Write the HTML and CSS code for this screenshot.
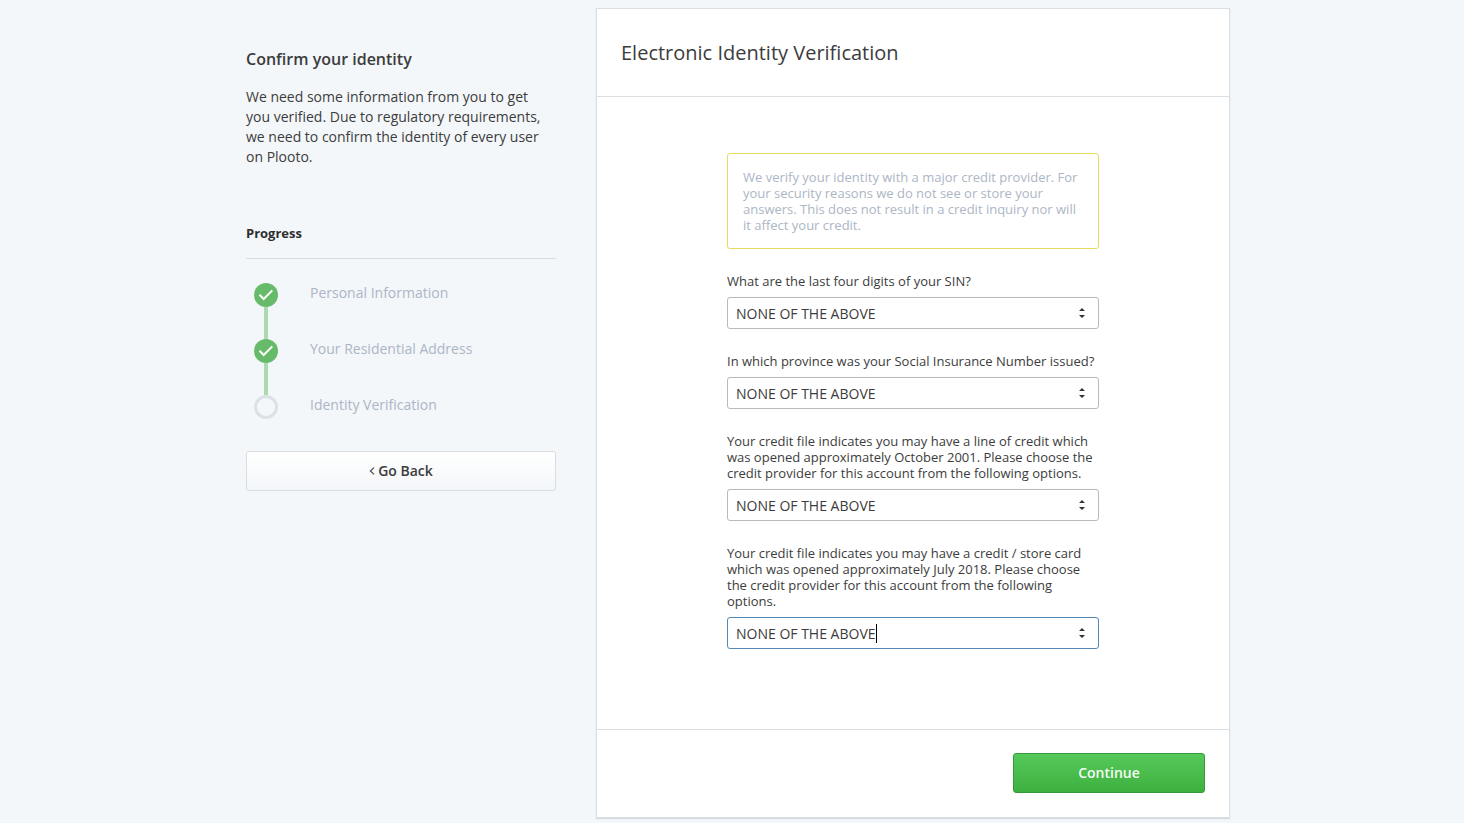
FILE: index.html
```html
<!DOCTYPE html>
<html lang="en">
<head>
<meta charset="utf-8">
<meta name="viewport" content="width=device-width, initial-scale=1">
<title>Electronic Identity Verification</title>
<link rel="stylesheet" href="styles.css">
</head>
<body>
<div class="page">
  <aside class="sidebar">
    <h1 class="sidebar-title">Confirm your identity</h1>
    <p class="sidebar-text">We need some information from you to get you verified. Due to regulatory requirements, we need to confirm the identity of every user on Plooto.</p>
    <h2 class="progress-title">Progress</h2>
    <ol class="steps">
      <li class="step step-done">
        <svg class="step-icon" viewBox="0 0 24 24" aria-hidden="true"><circle cx="12" cy="12" r="12" fill="#66bb6a"/><path d="M5.5 11.8l4.2 4.2 8.6-8.6" fill="none" stroke="#fff" stroke-width="2"/></svg>
        <span class="step-label">Personal Information</span>
      </li>
      <li class="step step-done">
        <svg class="step-icon" viewBox="0 0 24 24" aria-hidden="true"><circle cx="12" cy="12" r="12" fill="#66bb6a"/><path d="M5.5 11.8l4.2 4.2 8.6-8.6" fill="none" stroke="#fff" stroke-width="2"/></svg>
        <span class="step-label">Your Residential Address</span>
      </li>
      <li class="step">
        <svg class="step-icon" viewBox="0 0 24 24" aria-hidden="true"><circle cx="12" cy="12" r="10.5" fill="none" stroke="#dce1e6" stroke-width="3"/></svg>
        <span class="step-label">Identity Verification</span>
      </li>
    </ol>
    <button class="button button-back" type="button">
      <svg class="back-icon" viewBox="0 0 6 8" aria-hidden="true"><path d="M5 .6L1.4 4 5 7.4" fill="none" stroke="#555" stroke-width="1.3"/></svg>
      Go Back
    </button>
  </aside>

  <main class="card">
    <header class="card-header"><h2 class="card-title">Electronic Identity Verification</h2></header>
    <form class="card-form">
      <div class="questions">
        <p class="notice">We verify your identity with a major credit provider. For your security reasons we do not see or store your answers. This does not result in a credit inquiry nor will it affect your credit.</p>
        <div class="field">
          <label for="sin">What are the last four digits of your SIN?</label>
          <div class="select-box">
            <select id="sin"><option>NONE OF THE ABOVE</option></select>
            <svg class="arrows" viewBox="0 0 6 10" aria-hidden="true"><path d="M0 3L3 0l3 3zM0 7h6L3 10z" fill="#333"/></svg>
          </div>
        </div>
        <div class="field">
          <label for="province">In which province was your Social Insurance Number issued?</label>
          <div class="select-box">
            <select id="province"><option>NONE OF THE ABOVE</option></select>
            <svg class="arrows" viewBox="0 0 6 10" aria-hidden="true"><path d="M0 3L3 0l3 3zM0 7h6L3 10z" fill="#333"/></svg>
          </div>
        </div>
        <div class="field">
          <label for="credit-line">Your credit file indicates you may have a line of credit which was opened approximately October 2001. Please choose the credit provider for this account from the following options.</label>
          <div class="select-box">
            <select id="credit-line"><option>NONE OF THE ABOVE</option></select>
            <svg class="arrows" viewBox="0 0 6 10" aria-hidden="true"><path d="M0 3L3 0l3 3zM0 7h6L3 10z" fill="#333"/></svg>
          </div>
        </div>
        <div class="field">
          <label for="card">Your credit file indicates you may have a credit / store card which was opened approximately July 2018. Please choose the credit provider for this account from the following options.</label>
          <div class="select-box select-box-active">
            <select id="card"><option>NONE OF THE ABOVE</option></select>
            <span class="caret"></span>
            <svg class="arrows" viewBox="0 0 6 10" aria-hidden="true"><path d="M0 3L3 0l3 3zM0 7h6L3 10z" fill="#333"/></svg>
          </div>
        </div>
      </div>
      <footer class="card-footer"><button class="button button-continue" type="submit">Continue</button></footer>
    </form>
  </main>
</div>
</body>
</html>
```

FILE: styles.css
```css
* {
  box-sizing: border-box;
}

body {
  margin: 0;
  background: #f3f7fa;
  color: #3c3c3c;
  font: 14px/20px "Open Sans", "Noto Sans", sans-serif;
}

h1,
h2,
p,
ol {
  margin: 0;
  padding: 0;
}

.page {
  display: grid;
  grid-template-columns: 310px minmax(0, 1fr);
  align-items: start;
  gap: 40px;
  max-width: 996px;
  margin: 0 auto;
  padding: 8px 0 4px 12px;
}

.sidebar {
  padding-top: 39px;
}

.sidebar-title {
  margin-bottom: 16px;
  font-size: 16px;
  line-height: 24px;
  font-weight: 600;
}

.sidebar-text {
  margin-bottom: 56px;
  padding-right: 12px;
}

.progress-title {
  padding-bottom: 15px;
  border-bottom: 1px solid #d8dde1;
  color: #2e2e2e;
  font-size: 13px;
  line-height: 20px;
  font-weight: 700;
}

.steps {
  padding: 24px 8px 0;
  list-style: none;
}

.step {
  position: relative;
  display: flex;
  gap: 32px;
  height: 56px;
  color: #acb6c5;
}

.step-done::after {
  content: "";
  position: absolute;
  top: 24px;
  bottom: 0;
  left: 10px;
  width: 4px;
  background: #addab0;
}

.step-icon {
  width: 24px;
  height: 24px;
}

.button {
  height: 40px;
  border: 1px solid #d8dde1;
  border-radius: 3px;
  font: 600 14px/20px "Open Sans", "Noto Sans", sans-serif;
}

.button-back {
  display: flex;
  align-items: center;
  justify-content: center;
  gap: 3px;
  width: 100%;
  background: linear-gradient(#fff, #f3f6f9);
  color: #3c3c3c;
}

.back-icon {
  width: 6px;
  height: 8px;
}

.card {
  border: 1px solid #dadfe3;
  background: #fff;
  box-shadow: 0 1px 1px #d5dbe0;
}

.card-header {
  padding: 28px 24px 27px;
  border-bottom: 1px solid #dadfe3;
}

.card-title {
  font-size: 20px;
  line-height: 32px;
  font-weight: 400;
}

.questions {
  display: grid;
  gap: 24px;
  max-width: 372px;
  margin: 0 auto;
  padding: 56px 0 80px;
  font-size: 13px;
  line-height: 16px;
}

.notice {
  padding: 15px;
  border: 1px solid #e5dc62;
  border-radius: 3px;
  color: #acb6c5;
}

.field {
  display: grid;
  gap: 8px;
}

.select-box {
  position: relative;
}

.select-box select {
  display: block;
  width: 100%;
  height: 32px;
  padding: 2px 24px 0 8px;
  border: 1px solid #b9b9b9;
  border-radius: 3px;
  background: #fff;
  color: #3c3c3c;
  font: 14px/20px "Open Sans", "Noto Sans", sans-serif;
  appearance: none;
}

.select-box-active select {
  border-color: #5488b8;
}

.arrows {
  position: absolute;
  top: 11px;
  right: 14px;
  width: 6px;
  height: 10px;
  pointer-events: none;
}

.caret {
  position: absolute;
  top: 7px;
  left: 149px;
  width: 1px;
  height: 19px;
  background: #000;
}

.card-footer {
  display: flex;
  justify-content: flex-end;
  padding: 23px 24px 24px;
  border-top: 1px solid #dadfe3;
}

.button-continue {
  width: 192px;
  border-color: #359a3a;
  background: linear-gradient(#55c95a, #3db03f);
  color: #f4fbf4;
  font-weight: 600;
}
```
